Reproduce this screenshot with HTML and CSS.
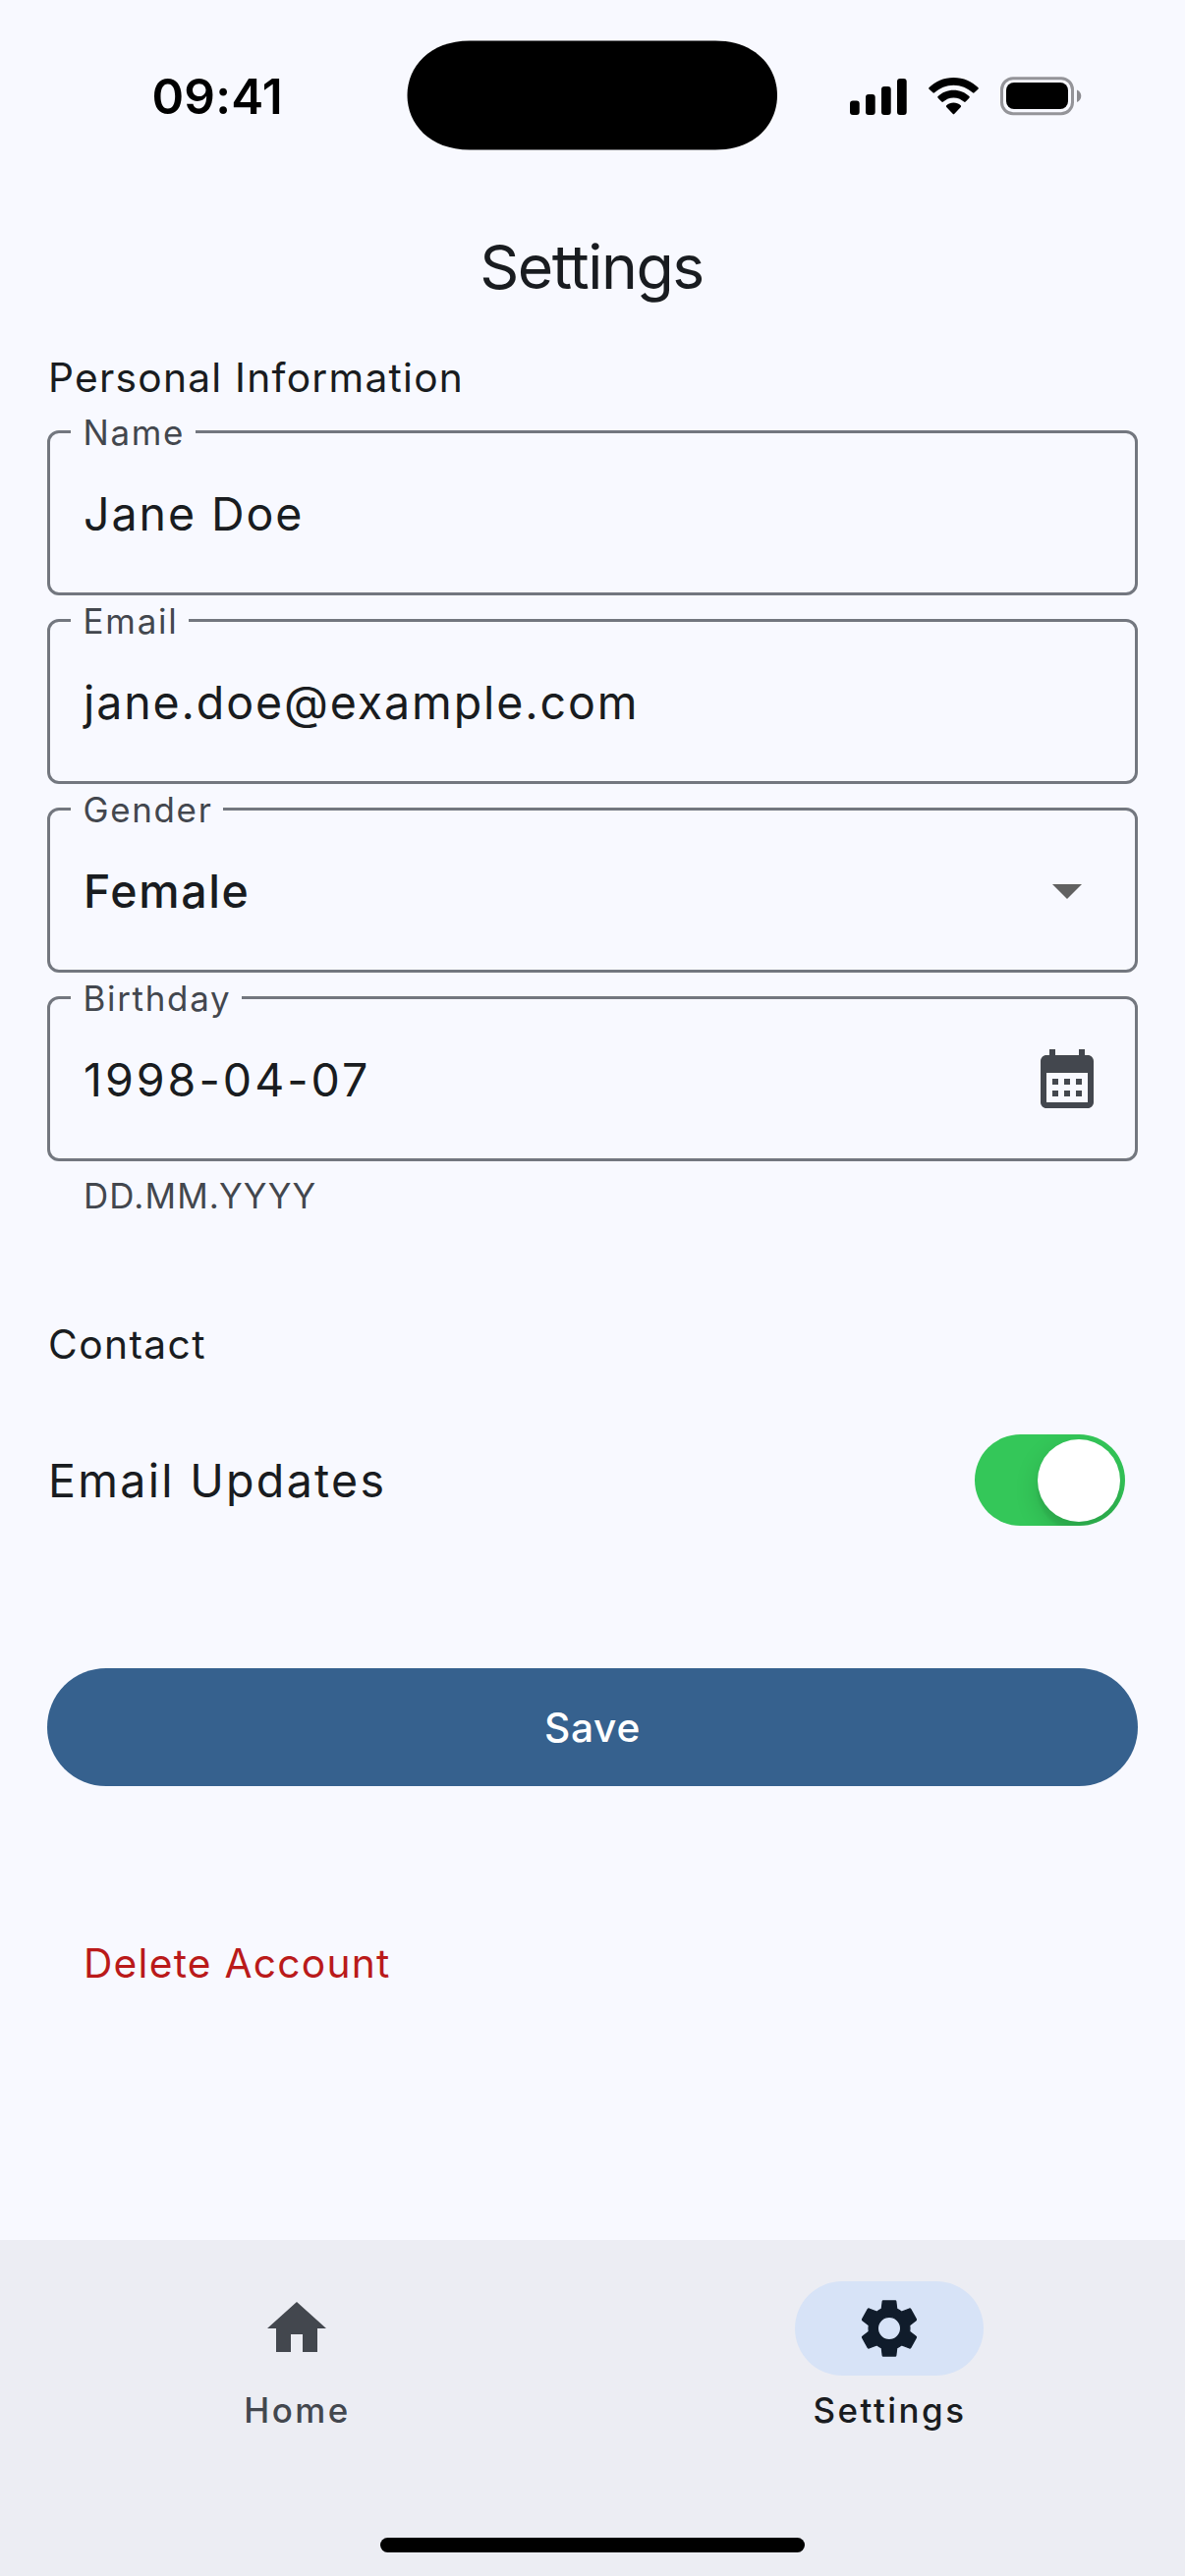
FILE: index.html
```html
<!DOCTYPE html>
<html lang="en">
<head>
<meta charset="utf-8">
<title>Settings</title>
<link rel="stylesheet" href="styles.css">
</head>
<body>
<div class="screen">
  <div class="status-bar">
    <span class="time">09:41</span>
    <svg class="island" width="378" height="112" viewBox="0 0 378 112"><path d="M64 .5H314C355 .5 377 27 377 56S355 111.500 314 111.500H64C23 111.500.5 85 .5 56S23 .5 64 .5z"/></svg>
    <div class="status-icons">
      <svg width="58" height="37" viewBox="0 0 58 37"><rect x="0" y="22.500" width="9.700" height="14.500" rx="3"/><rect x="16" y="16" width="9.700" height="21" rx="3"/><rect x="32" y="8" width="9.700" height="29" rx="3"/><rect x="48" y="0" width="9.700" height="37" rx="3"/></svg>
      <svg class="wifi" width="51" height="38" viewBox="0 0 51 38"><path d="M25.500 0C35.600 0 44.300 3.900 50.400 10.100a1.200 1.200 0 0 1 0 1.700L46.600 15.300a1.200 1.200 0 0 1-1.700 0C39.800 10.600 33 7.700 25.500 7.700S11.200 10.600 6.100 15.300a1.200 1.200 0 0 1-1.700 0L.6 11.800a1.200 1.200 0 0 1 0-1.700C6.700 3.900 15.400 0 25.500 0z"/><path d="M25.500 12.700c6.200 0 11.800 2.400 15.900 6.400a1.200 1.200 0 0 1 0 1.700L37.700 24.500a1.200 1.200 0 0 1-1.700 0C33.200 22 29.500 20.400 25.500 20.400S17.800 22 15 24.500a1.200 1.200 0 0 1-1.700 0L9.600 20.800a1.200 1.200 0 0 1 0-1.700c4.100-4 9.700-6.400 15.900-6.400z"/><path d="M25.500 25.500c2.700 0 5.200 1 7.200 2.700a1.200 1.200 0 0 1 .1 1.700L26.400 36.800a1.200 1.200 0 0 1-1.800 0L18.200 29.900a1.200 1.200 0 0 1 .1-1.700c2-1.700 4.500-2.700 7.200-2.700z"/></svg>
      <svg width="83" height="40" viewBox="0 0 83 40"><rect x="1.500" y="1.700" width="72" height="36" rx="11.500" fill="#f8f9ff" stroke="#949499" stroke-width="3"/><rect x="6" y="6" width="63" height="27" rx="8"/><path d="M78 13.500c2.700 1 4.300 3.400 4.300 6.200S80.700 24.900 78 25.900z" fill="#8b8b90"/></svg>
    </div>
  </div>

  <h1 class="title">Settings</h1>

  <main class="content">
    <h2 class="section-title">Personal Information</h2>
    <div class="fields">
      <div class="field"><span class="field-label">Name</span><span class="value">Jane Doe</span></div>
      <div class="field"><span class="field-label email-label">Email</span><span class="value email">jane.doe@example.com</span></div>
      <div class="field">
        <span class="field-label">Gender</span><span class="value selected">Female</span>
        <svg class="field-icon" viewBox="0 0 24 24" fill="#616161"><path d="M7 10l5 5 5-5z"/></svg>
      </div>
      <div class="field">
        <span class="field-label birthday-label">Birthday</span><span class="value date">1998-04-07</span>
        <svg class="field-icon" viewBox="0 0 24 24" fill="#43474e"><path d="M19 4h-1V2h-2v2H8V2H6v2H5c-1.110 0-1.990.9-1.990 2L3 20c0 1.100.89 2 2 2h14c1.100 0 2-.9 2-2V6c0-1.100-.9-2-2-2zm0 16H5V10h14v10zM9 14H7v-2h2v2zm4 0h-2v-2h2v2zm4 0h-2v-2h2v2zm-8 4H7v-2h2v2zm4 0h-2v-2h2v2zm4 0h-2v-2h2v2z"/></svg>
      </div>
    </div>
    <p class="helper">DD.MM.YYYY</p>

    <h2 class="section-title contact-title">Contact</h2>
    <div class="switch-row">
      <span class="switch-label">Email Updates</span>
      <span class="switch"><span class="thumb"></span></span>
    </div>

    <button class="save">Save</button>
    <button class="delete">Delete Account</button>
  </main>

  <nav class="nav">
    <div class="nav-item">
      <span class="indicator"><svg class="nav-icon" viewBox="0 0 24 24" fill="#43474e"><path d="M10 20v-6h4v6h5v-8h3L12 3 2 12h3v8z"/></svg></span>
      <span class="nav-label">Home</span>
    </div>
    <div class="nav-item active">
      <span class="indicator"><svg class="nav-icon" viewBox="-108 -108 216 216" fill="#101c2b" stroke="#101c2b" stroke-width="4" stroke-linejoin="round"><path fill-rule="evenodd" d="M-18.500-84H18.500Q20-84 20.300-82L23-60Q31-56 38-50.500L62-60Q64-60.500 65-59L82-28Q83-26 81.500-25L62-10Q63.300 0 62 10L81.500 25Q83 26 82 28L65 59Q64 60.500 62 60L38 50.500Q31 56 23 60L20.300 82Q20 84 18.500 84H-18.500Q-20 84-20.300 82L-23 60Q-31 56-38 50.500L-62 60Q-64 60.500-65 59L-82 28Q-83 26-81.500 25L-62 10Q-63.300 0-62-10L-81.500-25Q-83-26-82-28L-65-59Q-64-60.500-62-60L-38-50.500Q-31-56-23-60L-20.300-82Q-20-84-18.500-84zM0-35A35 35 0 1 0 0 35 35 35 0 1 0 0-35z"/></svg></span>
      <span class="nav-label">Settings</span>
    </div>
    <span class="home-indicator"></span>
  </nav>
</div>
</body>
</html>
```
FILE: styles.css
```css
* {
  box-sizing: border-box;
}

body {
  margin: 0;
  background: #f8f9ff;
  color: #191c20;
  font-family: Inter, "Liberation Sans", sans-serif;
}

.screen {
  display: flex;
  flex-direction: column;
  width: 1206px;
  height: 2622px;
  overflow: hidden;
}

/* Status bar */
.status-bar {
  position: relative;
  display: flex;
  align-items: center;
  justify-content: space-between;
  height: 196px;
  padding: 0 105px 0 154.5px;
  color: #000;
}

.time {
  font-size: 49.5px;
  font-weight: 600;
  letter-spacing: 0.2px;
}

.island {
  position: absolute;
  left: 414px;
  top: 41px;
}

.status-icons {
  display: flex;
  align-items: center;
}

.wifi {
  margin: 0 22px;
}

/* Header */
.title {
  margin: 0;
  padding-right: 2px;
  font-size: 62.5px;
  font-weight: 400;
  line-height: 150px;
  letter-spacing: -1.45px;
  text-align: center;
}

/* Form */
.content {
  display: flex;
  flex-direction: column;
  padding: 0 48px;
}

.section-title {
  margin: 0 0 15px;
  padding-left: 1px;
  font-size: 40.7px;
  font-weight: 400;
  line-height: 77px;
  letter-spacing: 1.25px;
}

.contact-title {
  margin: 78px 0 0;
  line-height: 76px;
  letter-spacing: 1.42px;
}

.fields {
  display: flex;
  flex-direction: column;
  gap: 24px;
}

.field {
  position: relative;
  display: flex;
  align-items: center;
  justify-content: space-between;
  height: 168px;
  padding: 0 33px 0 34px;
  border: 3px solid #73777f;
  border-radius: 12px;
}

.field-label {
  position: absolute;
  left: 21px;
  top: -22px;
  padding: 0 11px 0 12.5px;
  background: #f8f9ff;
  color: #43474e;
  font-size: 34.9px;
  line-height: 42px;
  letter-spacing: 1.69px;
}

.email-label {
  padding-right: 10px;
  letter-spacing: 1.8px;
}

.birthday-label {
  letter-spacing: 1.72px;
}

.value {
  padding-top: 2px;
  font-size: 46.5px;
  letter-spacing: 1.93px;
}

.email {
  letter-spacing: 1.9px;
}

.selected {
  font-weight: 500;
  letter-spacing: 1.6px;
}

.date {
  letter-spacing: 3.01px;
}

.field-icon {
  width: 72px;
  height: 72px;
}

.helper {
  margin: 0;
  padding-left: 37px;
  color: #43474e;
  font-size: 34.9px;
  line-height: 71px;
  letter-spacing: 1.19px;
}

.switch-row {
  display: flex;
  align-items: center;
  justify-content: space-between;
  height: 199px;
  padding: 0 13.5px 0 1px;
}

.switch-label {
  padding-top: 1px;
  font-size: 46.5px;
  letter-spacing: 2.3px;
}

.switch {
  display: flex;
  align-items: center;
  justify-content: flex-end;
  width: 153px;
  height: 93px;
  padding: 0 4.5px;
  border-radius: 47px;
  background: #34c759;
  overflow: hidden;
}

.thumb {
  width: 84px;
  height: 84px;
  border-radius: 50%;
  background: #fff;
  box-shadow: 0 9px 24px rgba(0, 0, 0, 0.15), 0 9px 3px rgba(0, 0, 0, 0.06);
}

.save,
.delete {
  height: 120px;
  border: 0;
  font: 400 40.7px Inter, "Liberation Sans", sans-serif;
}

.save {
  margin-top: 92px;
  border-radius: 60px;
  background: #36618e;
  color: #fff;
  font-weight: 500;
  letter-spacing: 0.71px;
}

.delete {
  align-self: flex-start;
  margin-top: 120px;
  padding: 0 37px;
  background: none;
  color: #ba1a1a;
  letter-spacing: 1.25px;
}

/* Bottom navigation */
.nav {
  position: relative;
  display: grid;
  grid-template-columns: 1fr 1fr;
  align-items: start;
  height: 342px;
  margin-top: auto;
  padding-top: 42px;
  background: #ecedf3;
}

.nav-item {
  display: flex;
  flex-direction: column;
  align-items: center;
  color: #43474e;
}

.indicator {
  display: flex;
  align-items: center;
  justify-content: center;
  width: 192px;
  height: 96px;
  border-radius: 48px;
}

.nav-icon {
  width: 72px;
  height: 72px;
}

.nav-label {
  padding-left: 2px;
  font-size: 34.9px;
  font-weight: 500;
  line-height: 71px;
  letter-spacing: 2.5px;
}

.active {
  color: #191c20;
}

.active .indicator {
  background: #d7e3f7;
}

.home-indicator {
  position: absolute;
  left: 387px;
  bottom: 24px;
  width: 432px;
  height: 15px;
  border-radius: 8px;
  background: #000;
}
```
